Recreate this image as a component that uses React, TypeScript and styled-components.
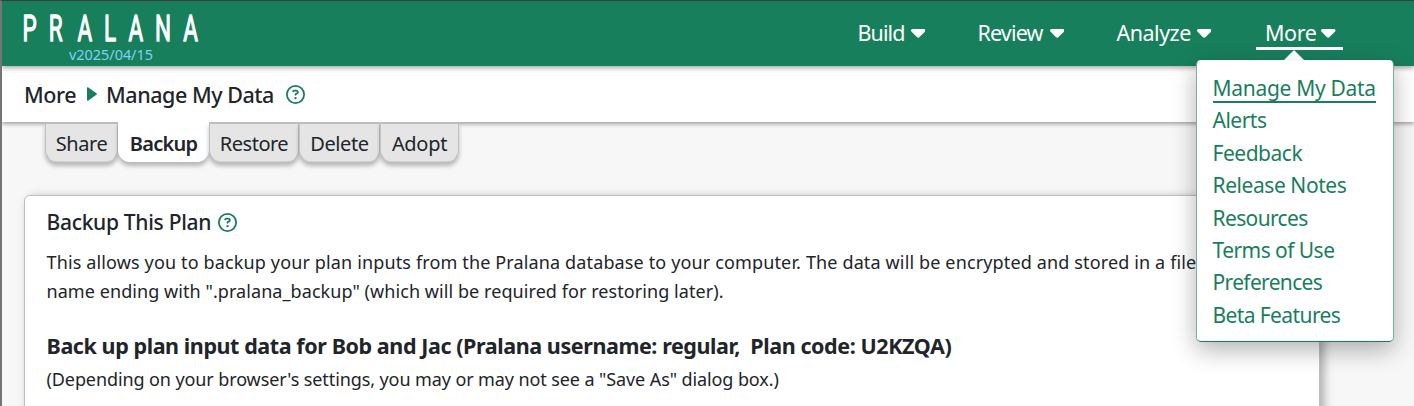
import React from "react";
import styled, { createGlobalStyle } from "styled-components";
import { FaCaretDown, FaCaretRight, FaRegCircleQuestion } from "react-icons/fa6";

const green = "#187f5c";

const GlobalStyle = createGlobalStyle`
  * { box-sizing: border-box; }
  body {
    margin: 0;
    background: #f7f7f7;
    color: #212529;
    font-family: "Noto Sans", "Open Sans", sans-serif;
    overflow: hidden;
  }
`;

const Page = styled.div`
  height: 406px;
  border-left: 2px solid #757575;
  border-top: 1px solid #3c3c3c;
  display: flex;
  flex-direction: column;
  overflow: hidden;
`;

const Header = styled.header`
  flex: none;
  height: 65px;
  background: ${green};
  display: flex;
  justify-content: space-between;
  position: relative;
  z-index: 3;
  box-shadow: 0 2px 5px rgba(0, 0, 0, 0.35);
`;

const Brand = styled.div`
  width: 200px;
  padding: 10px 0 0 18px;
  display: flex;
  flex-direction: column;
`;

const Wordmark = styled.svg`
  display: block;
  width: 182px;
  height: 33px;
  overflow: visible;
  font-family: "Roboto", sans-serif;
  font-size: 37.5px;
  font-weight: 400;
`;

const Version = styled.span`
  margin-left: 49px;
  font-size: 14.5px;
  line-height: 20px;
  letter-spacing: -0.05px;
  color: #7fd0f5;
`;

const Nav = styled.nav`
  display: flex;
  gap: 36px;
  padding: 16px 71px 0 0;
`;

const NavItem = styled.div<{ $width: number; $spacing: number; $active?: boolean }>`
  position: relative;
  width: ${(p) => p.$width}px;
  height: 33px;
  padding: ${(p) => (p.$active ? "0 7.5px 0 9px" : "0 9px 0 7.5px")};
  display: flex;
  align-items: center;
  justify-content: space-between;
  color: #fff;
  font-size: 21.5px;
  line-height: 33px;
  letter-spacing: ${(p) => p.$spacing}px;
  border-bottom: 3px solid ${(p) => (p.$active ? "#fff" : "transparent")};
  svg { width: 14.5px; height: 24px; flex: none; }
`;

const Menu = styled.div`
  position: absolute;
  top: 43px;
  right: -51px;
  width: 198px;
  height: 282px;
  padding: 12px 16px 12px 15.5px;
  background: #fff;
  border: 1px solid rgba(24, 127, 92, 0.6);
  border-top-color: #fff;
  border-bottom-color: ${green};
  border-radius: 5px;
  box-shadow: 0 8px 24px rgba(0, 0, 0, 0.3);
  display: flex;
  flex-direction: column;
  align-items: flex-start;
  &::before {
    content: "";
    position: absolute;
    top: -11px;
    left: 86px;
    border: 11px solid transparent;
    border-top: 0;
    border-bottom-color: #f8f8f8;
  }
`;

const MenuItem = styled.a<{ $current?: boolean; $spacing: number }>`
  flex: none;
  height: 32.4px;
  color: ${green};
  font-size: 21px;
  line-height: 30px;
  letter-spacing: ${(p) => p.$spacing}px;
  white-space: nowrap;
  box-shadow: ${(p) => (p.$current ? `0 -2px 0 #fff inset, 0 -4px 0 ${green} inset` : "none")};
`;

const Crumbs = styled.div`
  flex: none;
  height: 56px;
  background: #fff;
  display: flex;
  align-items: center;
  padding: 0 0 0 22px;
  position: relative;
  z-index: 1;
  box-shadow: 0 2px 4px rgba(0, 0, 0, 0.35);
  font-size: 21.5px;
  font-weight: 500;
  letter-spacing: -0.46px;
  white-space: nowrap;
`;

const CrumbArrow = styled.svg`
  fill: ${green};
  width: 10px;
  height: 14px;
  margin: 0 9px 0 11px;
`;

const Help = styled(FaRegCircleQuestion)<{ $gap: number }>`
  color: ${green};
  width: 19px;
  height: 19px;
  margin-left: ${(p) => p.$gap}px;
`;

const Tabs = styled.div`
  flex: none;
  height: 40px;
  display: flex;
  align-items: flex-end;
  padding-left: 43px;
  position: relative;
  z-index: 2;
`;

const Tab = styled.div<{ $width: number; $active?: boolean; $spacing: number }>`
  width: ${(p) => p.$width}px;
  height: ${(p) => (p.$active ? 41 : 40)}px;
  text-align: center;
  font-size: 20px;
  line-height: ${(p) => (p.$active ? 42 : 40)}px;
  letter-spacing: ${(p) => p.$spacing}px;
  font-weight: ${(p) => (p.$active ? 600 : 400)};
  background: ${(p) => (p.$active ? "#fff" : "#e5e5e5")};
  border: 1px solid ${(p) => (p.$active ? "#fff" : "#c2c2c2")};
  border-top: 2px solid ${(p) => (p.$active ? "#fff" : "#bdbdbd")};
  border-bottom-color: ${(p) => (p.$active ? "#fff" : "#d4d4d4")};
  border-radius: 0 0 12px 12px;
  box-shadow: 0 4px 4px rgba(0, 0, 0, 0.26);
`;

const Card = styled.main`
  flex: none;
  width: 1296px;
  height: 240px;
  margin: 33px 0 0 22px;
  padding: 10px 22px 10px 21.5px;
  background: #fff;
  border: 1px solid #bfbfbf;
  border-radius: 6px;
  box-shadow: 4px 2px 10px rgba(0, 0, 0, 0.3);
`;

const CardTitle = styled.h2`
  margin: 0 0 10px;
  height: 32px;
  display: flex;
  align-items: center;
  font-size: 21px;
  font-weight: 500;
  letter-spacing: -0.3px;
`;

const Text = styled.p<{ $spacing: number }>`
  margin: 0;
  font-size: 18px;
  line-height: 29px;
  letter-spacing: ${(p) => p.$spacing}px;
  white-space: nowrap;
`;

const PlanLine = styled.h3`
  margin: 24px 0 3px;
  font-size: 21.5px;
  line-height: 32px;
  font-weight: 700;
  letter-spacing: -0.42px;
  white-space: pre;
`;

const menuItems: [string, number][] = [
  ["Manage My Data", -0.3],
  ["Alerts", -0.5],
  ["Feedback", -0.48],
  ["Release Notes", -0.43],
  ["Resources", -0.63],
  ["Terms of Use", -0.55],
  ["Preferences", -0.66],
  ["Beta Features", -0.6],
];

export default function App() {
  return (
    <>
      <GlobalStyle />
      <Page>
        <Header>
          <Brand>
            <Wordmark viewBox="0 0 182 33" role="img" aria-label="Pralana">
              <text
                transform="scale(0.6 1)"
                x="4 48 96 140 181 225 272"
                y="30"
                fill="#fff"
                stroke="#fff"
                strokeWidth="1.3"
                strokeLinejoin="round"
              >
                PRALANA
              </text>
            </Wordmark>
            <Version>v2025/04/15</Version>
          </Brand>
          <Nav>
            <NavItem $width={84} $spacing={-0.9}>Build<FaCaretDown /></NavItem>
            <NavItem $width={103} $spacing={-0.85}>Review<FaCaretDown /></NavItem>
            <NavItem $width={111} $spacing={-0.5}>Analyze<FaCaretDown /></NavItem>
            <NavItem $width={87} $spacing={-0.4} $active>
              More<FaCaretDown />
              <Menu>
                {menuItems.map(([label, spacing], i) => (
                  <MenuItem key={label} $current={i === 0} $spacing={spacing}>{label}</MenuItem>
                ))}
              </Menu>
            </NavItem>
          </Nav>
        </Header>
        <Crumbs>
          More
          <CrumbArrow viewBox="0 0 10 14"><path d="M0 1.2Q0-.4 1.4.6L9.4 6.2Q10.4 7 9.4 7.8L1.4 13.4Q0 14.4 0 12.8Z" /></CrumbArrow>
          Manage My Data<Help $gap={12} />
        </Crumbs>
        <Tabs>
          <Tab $width={73} $spacing={-0.4}>Share</Tab>
          <Tab $width={91} $spacing={-0.75} $active>Backup</Tab>
          <Tab $width={90} $spacing={-0.5}>Restore</Tab>
          <Tab $width={81} $spacing={-0.4}>Delete</Tab>
          <Tab $width={79} $spacing={-0.3}>Adopt</Tab>
        </Tabs>
        <Card>
          <CardTitle>Backup This Plan<Help $gap={7} /></CardTitle>
          <Text $spacing={0.14}>
            This allows you to backup your plan inputs from the Pralana database to your computer. The data will be encrypted and stored in a file
          </Text>
          <Text $spacing={0.07}>
            name ending with ".pralana_backup" (which will be required for restoring later).
          </Text>
          <PlanLine>{"Back up plan input data for Bob and Jac (Pralana username: regular,  Plan code: U2KZQA)"}</PlanLine>
          <Text $spacing={-0.1}>(Depending on your browser's settings, you may or may not see a "Save As" dialog box.)</Text>
        </Card>
      </Page>
    </>
  );
}
